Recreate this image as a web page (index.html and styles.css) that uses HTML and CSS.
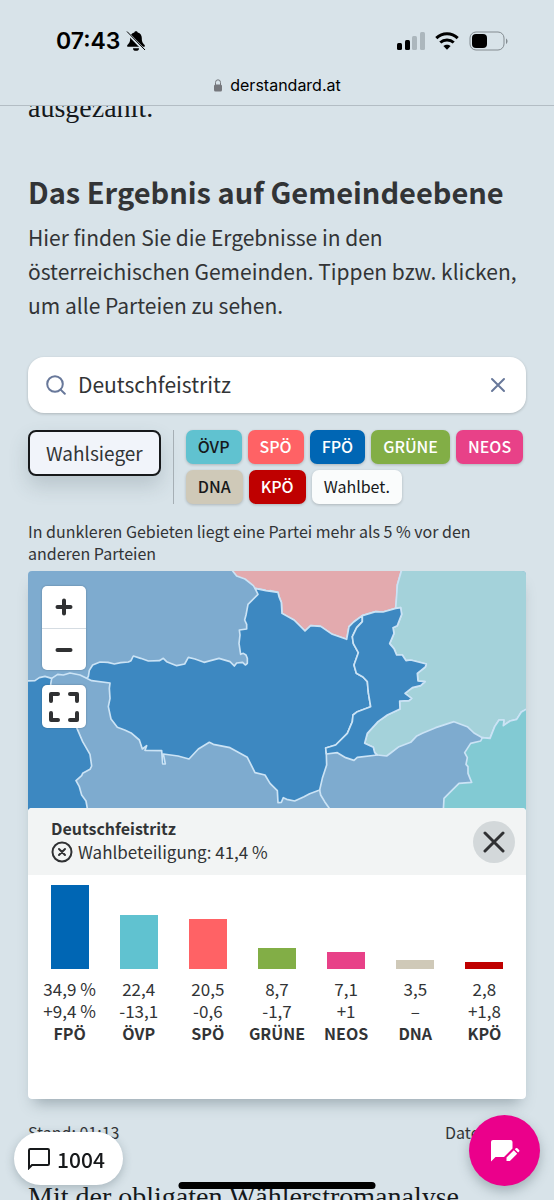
FILE: index.html
```html
<!DOCTYPE html>
<html lang="de">
<head>
  <meta charset="UTF-8">
  <meta name="viewport" content="width=device-width, initial-scale=1.0">
  <title>Das Ergebnis auf Gemeindeebene</title>
  <link rel="stylesheet" href="styles.css">
</head>
<body>
  <header class="browser-top">
    <div class="status-bar">
      <div class="status-left">
        <span class="clock">07:43</span>
        <svg class="bell" width="20" height="22" viewBox="0 0 20 22" aria-hidden="true">
          <path d="M10 1.2c-.9 0-1.5.5-1.7 1.200C5.500 3.200 4.200 5.300 4.200 8c0 4-1 5.300-2.600 6.700-.9.9-.5 2.100.7 2.100h15.400c1.200 0 1.600-1.200.7-2.100C16.800 13.300 15.800 12 15.800 8c0-2.700-1.300-4.800-4.100-5.600C11.500 1.700 10.900 1.200 10 1.200zM7 18.200a3 2.600 0 0 0 6 0z"/>
          <path class="bell-gap" d="M1 2.500L18.500 20.500"/>
          <path class="bell-slash" d="M1 1.500L19 20"/>
        </svg>
      </div>
      <div class="status-right">
        <svg width="28" height="20" viewBox="0 0 28 20" aria-hidden="true">
          <rect x="0" y="12" width="5" height="7" rx="1.500"/>
          <rect x="8" y="9" width="5" height="10" rx="1.500"/>
          <rect class="dim" x="15" y="5" width="5" height="14" rx="1.500"/>
          <rect class="dim" x="23" y="1" width="5" height="18" rx="1.500"/>
        </svg>
        <svg width="24" height="18" viewBox="0 0 24 18" aria-hidden="true">
          <path class="wave" d="M1.300 6.200C7.300.4 16.700.4 22.700 6.200"/>
          <path class="wave" d="M5.300 10.500c3.800-3.500 9.600-3.500 13.400 0"/>
          <path d="M12 17.800l3.600-3.700c-2.100-1.900-5.100-1.900-7.200 0z"/>
        </svg>
        <svg width="40" height="20" viewBox="0 0 40 20" aria-hidden="true">
          <rect class="battery" x="1" y="1" width="34" height="18" rx="6"/>
          <rect x="3" y="3" width="15" height="14" rx="4"/>
          <path class="tip" d="M37 7.500v5.500c2-1 2-4.500 0-5.500z"/>
        </svg>
      </div>
    </div>
    <div class="url-bar">
      <svg width="10" height="13" viewBox="0 0 10 13" aria-hidden="true">
        <rect x="1" y="5.500" width="8" height="7" rx="1.500"/>
        <path d="M2.500 6V3.500a2.500 2.700 0 0 1 5 0V6"/>
      </svg>
      <span>derstandard.at</span>
    </div>
  </header>

  <main class="article">
    <p class="story story-before">ausgezahlt.</p>

    <section class="result">
      <h2 class="title">Das Ergebnis auf Gemeindeebene</h2>
      <p class="intro">Hier finden Sie die Ergebnisse in den österreichischen Gemeinden. Tippen bzw. klicken, um alle Parteien zu sehen.</p>

      <div class="search">
        <svg width="20" height="20" viewBox="0 0 20 20" aria-hidden="true">
          <circle cx="9" cy="9" r="7.800"/>
          <path d="M14.600 14.600L18.800 18.800"/>
        </svg>
        <input type="text" aria-label="Gemeinde suchen" value="Deutschfeistritz">
        <button class="clear" type="button" aria-label="Eingabe löschen">
          <svg width="16" height="16" viewBox="0 0 16 16"><path d="M2 2l12 12M14 2L2 14"/></svg>
        </button>
      </div>

      <div class="filters">
        <button class="winner" type="button">Wahlsieger</button>
        <div class="parties">
          <button class="chip oevp" type="button">ÖVP</button>
          <button class="chip spoe" type="button">SPÖ</button>
          <button class="chip fpoe" type="button">FPÖ</button>
          <button class="chip gruene" type="button">GRÜNE</button>
          <button class="chip neos" type="button">NEOS</button>
          <button class="chip dna" type="button">DNA</button>
          <button class="chip kpoe" type="button">KPÖ</button>
          <button class="chip turnout" type="button">Wahlbet.</button>
        </div>
      </div>

      <p class="note">In dunkleren Gebieten liegt eine Partei mehr als 5 % vor den anderen Parteien</p>

      <div class="card">
        <div class="map">
          <svg class="map-svg" viewBox="0 0 1494 723" role="img" aria-label="Gemeindekarte">
            <rect class="area-light-blue" width="1494" height="723"/>
            <!-- SPÖ, north -->
            <path class="area-red" d="M614-10V0l12 15 25 9 25 20 5 8 30 5 3 8 12-6 24 5 3 13 7 17 2 33 16 10 20 10 33 33 17-16 30 2 35 24 43 15 7-38 14-14 26-19 40-12 22 1 38-11 3-30 2-40 12-42V-10z"/>
            <!-- ÖVP, east -->
            <path class="area-light-teal" d="M1120-10L1120 0 1108 42 1106 72 1103 112 1118 110 1121 130 1108 164 1095 170 1098 187 1085 218 1098 233 1106 252 1123 252 1134 269 1148 267 1195 279 1192 288 1168 307 1170 330 1191 332 1178 344 1153 350 1131 367 1151 382 1143 389 1115 390 1116 414 1078 432 1050 452 1018 487 1010 517 1036 529 1040 545 1048 552 1076 555 1088 546 1113 527 1148 514 1165 496 1183 487 1223 470 1278 452 1318 467 1338 486 1363 500 1386 502 1400 467 1413 447 1428 447 1426 464 1446 450 1466 445 1480 423 1510 406 1510-10z"/>
            <path class="area-teal" d="M1510 406L1480 423 1466 445 1446 450 1426 464 1428 447 1413 447 1400 467 1386 502 1363 500 1358 510 1328 517 1310 545 1318 560 1314 580 1320 587 1320 607 1331 634 1293 637 1268 662 1248 682 1245 735 1510 735z"/>
            <!-- Deutschfeistritz -->
            <path class="area-blue" d="M681 52L690 70 660 100 654 132 650 147 656 160 656 174 634 177 636 192 633 217 638 250 646 247 654 252 658 262 658 277 652 282 644 274 626 276 619 285 606 272 573 262 528 274 501 264 481 259 470 279 446 284 416 272 406 262 394 269 361 270 338 262 316 255 309 269 301 273 278 275 259 279 240 274 216 273 194 282 184 298 181 317 176 322 191 329 246 336 244 352 246 382 241 407 249 444 268 469 290 477 311 487 334 507 343 534 356 524 351 538 401 539 404 579 412 579 406 549 450 555 483 564 511 534 544 514 556 520 606 530 658 559 681 605 711 612 726 637 748 659 750 695 760 694 766 680 776 685 800 690 828 677 845 668 875 657 883 622 896 582 895 549 893 531 923 522 958 487 973 452 975 432 988 422 1028 407 1021 365 1018 332 1005 318 985 307 978 282 991 245 976 218 973 197 986 170 1003 152 1003 134 977 153 963 167 956 205 913 190 878 166 848 164 831 180 798 147 762 127 760 94 753 77 750 64 714 59z"/>
            <path class="area-blue" d="M1003 134L1043 122 1065 123 1103 112 1118 110 1121 130 1108 164 1095 170 1098 187 1085 218 1098 233 1106 252 1123 252 1134 269 1148 267 1195 279 1192 288 1168 307 1170 330 1191 332 1178 344 1153 350 1131 367 1151 382 1143 389 1115 390 1116 414 1078 432 1050 452 1018 487 1010 517 1036 529 1040 545 1048 552 988 559 978 568 953 560 928 545 895 549 893 531 923 522 958 487 973 452 975 432 988 422 1028 407 1021 365 1018 332 1005 318 985 307 978 282 991 245 976 218 973 197 986 170 1003 152z"/>
            <!-- south-west -->
            <path class="area-blue" d="M-10 330L21 329 34 320 51 316 71 322 68 340 92 400 146 470 164 512 186 550 191 585 186 595 164 607 161 614 144 629 154 647 161 672 174 690 182 735-10 735z"/>
            <path class="border" d="M71 322L89 310 106 312 126 306 156 312 176 322"/>
            <path class="border" d="M875 657L878 672 890 692 915 728"/>
          </svg>
          <div class="map-controls">
            <div class="zoom">
              <button type="button" aria-label="Vergrößern">
                <svg width="18" height="18" viewBox="0 0 18 18"><path d="M9 2.500v13M2.500 9h13"/></svg>
              </button>
              <button type="button" aria-label="Verkleinern">
                <svg width="18" height="18" viewBox="0 0 18 18"><path d="M2.500 9h13"/></svg>
              </button>
            </div>
            <button class="fullscreen" type="button" aria-label="Vollbild">
              <svg width="32" height="32" viewBox="0 0 32 32"><path d="M3 10V3h7M22 3h7v7M29 22v7h-7M10 29H3v-7"/></svg>
            </button>
          </div>
        </div>

        <div class="panel">
          <div class="panel-head">
            <div class="panel-title">
              <h3 class="place">Deutschfeistritz</h3>
              <p class="turnout-line">
                <svg width="22" height="22" viewBox="0 0 22 22" aria-hidden="true">
                  <circle cx="11" cy="11" r="9.500"/>
                  <path d="M8 8l6 6M14 8l-6 6"/>
                </svg>
                Wahlbeteiligung: 41,4 %
              </p>
            </div>
            <button class="close" type="button" aria-label="Schließen">
              <svg width="22" height="22" viewBox="0 0 22 22"><path d="M2 2l18 18M20 2L2 20"/></svg>
            </button>
          </div>
          <table class="chart">
            <tr class="bars">
              <td><div class="bar fpoe" style="height: 84px"></div></td>
              <td><div class="bar oevp" style="height: 54px"></div></td>
              <td><div class="bar spoe" style="height: 50px"></div></td>
              <td><div class="bar gruene" style="height: 21px"></div></td>
              <td><div class="bar neos" style="height: 17px"></div></td>
              <td><div class="bar dna" style="height: 9px"></div></td>
              <td><div class="bar kpoe" style="height: 7px"></div></td>
            </tr>
            <tr class="share">
              <td>34,9 %</td><td>22,4</td><td>20,5</td><td>8,7</td><td>7,1</td><td>3,5</td><td>2,8</td>
            </tr>
            <tr>
              <td>+9,4 %</td><td>-13,1</td><td>-0,6</td><td>-1,7</td><td>+1</td><td>–</td><td>+1,8</td>
            </tr>
            <tr>
              <th>FPÖ</th><th>ÖVP</th><th>SPÖ</th><th>GRÜNE</th><th>NEOS</th><th>DNA</th><th>KPÖ</th>
            </tr>
          </table>
        </div>
      </div>

      <div class="source">
        <span>Stand: 01:13</span>
        <span>Daten: APA</span>
      </div>
    </section>

    <p class="story">Mit der obligaten Wählerstromanalyse</p>
  </main>

  <a class="comments" href="#forum">
    <svg width="22" height="22" viewBox="0 0 22 22" aria-hidden="true"><path d="M1 20V2.200Q1 1 2.200 1h17.600Q21 1 21 2.200v13.600q0 1.200-1.200 1.200H4z"/></svg>
    <span>1004</span>
  </a>
  <button class="write" type="button" aria-label="Kommentar schreiben">
    <svg width="30" height="24" viewBox="0 0 30 24">
      <path d="M1 22.500V3Q1 1 3 1h17.500q2 0 2 2v6.500L14 18H5.500z"/>
      <path d="M16.500 18.600l7.300-7.300 3.400 3.400-7.300 7.300h-3.400zM24.800 10.300l1-1q.8-.7 1.600 0l1.700 1.700q.8.8 0 1.600l-1 1z"/>
    </svg>
  </button>
  <div class="home-indicator"></div>
</body>
</html>
```

FILE: styles.css
```css
* {
  box-sizing: border-box;
}

body {
  margin: 0;
  height: 100vh;
  overflow: hidden;
  background-color: #d8e3e9;
  color: #323436;
  font-family: "Noto Sans CJK SC", "Noto Sans", sans-serif;
}

h2, h3, p {
  margin: 0;
}

button, input {
  font-family: inherit;
  color: inherit;
}

button {
  display: flex;
  align-items: center;
  justify-content: center;
  padding: 0;
  border: none;
  cursor: pointer;
}

svg {
  display: block;
}

/* browser chrome */
.browser-top {
  position: relative;
  z-index: 2;
  height: 106px;
  padding-top: 24px;
  background-color: #d8e3e9;
  border-bottom: 1px solid #b3bdc4;
  color: #000;
  font-family: Inter, sans-serif;
}

.status-bar {
  display: flex;
  justify-content: space-between;
  align-items: center;
  height: 34px;
  padding: 0 45px 0 56px;
}

.status-left, .status-right {
  display: flex;
  align-items: center;
}

.status-left {
  gap: 5px;
}

.status-right {
  gap: 10px;
}

.clock {
  font-size: 23px;
  font-weight: 600;
}

.bell-gap {
  stroke: #d8e3e9;
  stroke-width: 3;
}

.bell-slash {
  stroke: #000;
  stroke-width: 1;
}

.dim {
  fill: #acb7bd;
}

.wave {
  fill: none;
  stroke: #000;
  stroke-width: 3;
}

.battery {
  fill: none;
  stroke: #838b90;
}

.tip {
  fill: #838b90;
}

.url-bar {
  display: flex;
  justify-content: center;
  align-items: center;
  gap: 7px;
  height: 22px;
  margin-top: 16px;
  font-size: 16px;
}

.url-bar rect {
  fill: #75777c;
}

.url-bar path {
  fill: none;
  stroke: #75777c;
}

/* article */
.article {
  padding: 0 28px;
}

.story {
  font-family: "Liberation Serif", serif;
  font-size: 28px;
  line-height: 36px;
  color: #15191c;
  white-space: nowrap;
}

.story-before {
  margin-top: -16px;
}

.result {
  padding: 43px 0 36px;
}

.title {
  font-size: 29px;
  line-height: 44px;
}

.intro {
  margin-top: 7px;
  font-size: 21px;
  line-height: 34px;
}

/* search */
.search {
  display: flex;
  align-items: center;
  gap: 12px;
  height: 56px;
  margin-top: 35px;
  padding: 0 18px;
  background-color: #fff;
  border-radius: 16px;
  box-shadow: 0 1px 3px rgba(0, 0, 0, 0.2);
}

.search svg {
  fill: none;
  stroke: #68789a;
  stroke-width: 2;
  stroke-linecap: round;
}

.search input {
  flex: 1;
  min-width: 0;
  padding: 0 0 2px;
  border: none;
  outline: none;
  background: none;
  font-size: 21px;
}

.clear {
  width: 20px;
  height: 32px;
  background: none;
}

/* party filter */
.filters {
  display: flex;
  align-items: flex-start;
  gap: 12px;
  margin-top: 17px;
}

.winner {
  flex-shrink: 0;
  height: 46px;
  padding: 0 16px 2px;
  background-color: #f1f4fa;
  border: 2px solid #17191b;
  border-radius: 8px;
  box-shadow: 0 10px 20px rgba(60, 80, 90, 0.2);
  font-size: 19px;
}

.parties {
  display: flex;
  flex-wrap: wrap;
  gap: 6px;
  padding-left: 12px;
  border-left: 1px solid #a6afb5;
}

.chip {
  height: 34px;
  padding: 0 12px 2px;
  border-radius: 7px;
  box-shadow: 0 1px 3px rgba(0, 0, 0, 0.2);
  font-size: 16px;
  font-weight: 500;
  color: #fff;
}

.oevp {
  background-color: #60c2d0;
}

.spoe {
  background-color: #ff6265;
}

.fpoe {
  background-color: #0066b4;
}

.gruene {
  background-color: #82ae46;
}

.neos {
  background-color: #e84188;
}

.dna {
  background-color: #cfc9b8;
}

.kpoe {
  background-color: #bf0000;
}

.turnout {
  background-color: #fafcfc;
}

.chip.oevp, .chip.dna, .chip.turnout {
  color: #17191b;
}

.chip.turnout {
  font-weight: 400;
}

.note {
  margin-top: 16px;
  font-size: 16px;
  line-height: 22px;
}

/* map and result card */
.card {
  margin-top: 7px;
  border-radius: 4px;
  overflow: hidden;
  box-shadow: 0 10px 14px -6px rgba(60, 80, 90, 0.4);
}

.map {
  position: relative;
}

.map-svg {
  width: 100%;
  height: auto;
}

.map-svg path {
  stroke: #cbe3f5;
  stroke-width: 5;
  stroke-linejoin: round;
}

.map-svg .border {
  fill: none;
}

.area-light-blue {
  fill: #7eabcf;
}

.area-blue {
  fill: #3d88c1;
}

.area-red {
  fill: #e3aaae;
}

.area-light-teal {
  fill: #a4d2da;
}

.area-teal {
  fill: #82cad3;
}

.map-controls {
  position: absolute;
  top: 15px;
  left: 14px;
  display: grid;
  gap: 15px;
}

.map-controls button {
  width: 44px;
  height: 42px;
  background-color: #fff;
}

.map-controls svg {
  fill: none;
  stroke: #303133;
  stroke-width: 4;
  stroke-linecap: round;
  stroke-linejoin: round;
}

.zoom {
  border-radius: 5px;
  overflow: hidden;
  box-shadow: 0 0 2px rgba(0, 0, 0, 0.3);
}

.zoom button + button {
  border-top: 1px solid #d5dce2;
}

.map-controls .fullscreen {
  height: 43px;
  border-radius: 5px;
  box-shadow: 0 0 2px rgba(0, 0, 0, 0.3);
}

/* slides up over the lower edge of the map */
.panel {
  position: relative;
  margin-top: -4px;
  padding-bottom: 55px;
  border-radius: 4px;
  overflow: hidden;
  background-color: #fff;
}

.panel-head {
  display: flex;
  justify-content: space-between;
  align-items: center;
  height: 67px;
  padding: 0 11px 0 23px;
  background-color: #f2f4f4;
}

.panel-title {
  padding-bottom: 4px;
}

.place {
  font-size: 16px;
  line-height: 24px;
}

.turnout-line {
  display: flex;
  align-items: center;
  gap: 5px;
  font-size: 17px;
  line-height: 24px;
}

.turnout-line svg, .close svg {
  fill: none;
  stroke: #303133;
  stroke-width: 2;
  stroke-linecap: round;
}

.close {
  width: 42px;
  height: 42px;
  border-radius: 50%;
  background-color: #d3d8da;
}

.close svg {
  stroke-width: 3;
}

.chart {
  width: 100%;
  padding: 0 7px;
  border-spacing: 0;
  table-layout: fixed;
  text-align: center;
  font-size: 17px;
  line-height: 22px;
}

.chart td, .chart th {
  padding: 0;
}

.chart th {
  font-size: 16px;
}

.chart .bars td {
  height: 94px;
  vertical-align: bottom;
}

.chart .share td {
  padding-top: 9px;
}

.bar {
  width: 38px;
  margin: 0 auto;
}

.source {
  display: flex;
  justify-content: space-between;
  margin-top: 22px;
  font-size: 16px;
  line-height: 22px;
}

/* floating buttons */
.comments {
  position: fixed;
  left: 14px;
  bottom: 15px;
  display: flex;
  align-items: center;
  gap: 7px;
  height: 53px;
  padding: 0 18px 0 14px;
  border-radius: 27px;
  background-color: #fff;
  box-shadow: 0 3px 10px rgba(60, 80, 90, 0.3);
  color: #17191b;
  font-size: 21px;
  font-weight: 500;
  text-decoration: none;
}

.comments svg {
  fill: none;
  stroke: #17191b;
  stroke-width: 2;
}

.write {
  position: fixed;
  right: 14px;
  bottom: 14px;
  width: 71px;
  height: 71px;
  border-radius: 50%;
  background-color: #eb008b;
  box-shadow: 0 5px 12px rgba(60, 80, 90, 0.35);
}

.write svg {
  fill: #fff;
}

.home-indicator {
  position: fixed;
  left: 50%;
  bottom: 11px;
  width: 197px;
  height: 7px;
  border-radius: 4px;
  background-color: #000;
  transform: translateX(-50%);
}
```
